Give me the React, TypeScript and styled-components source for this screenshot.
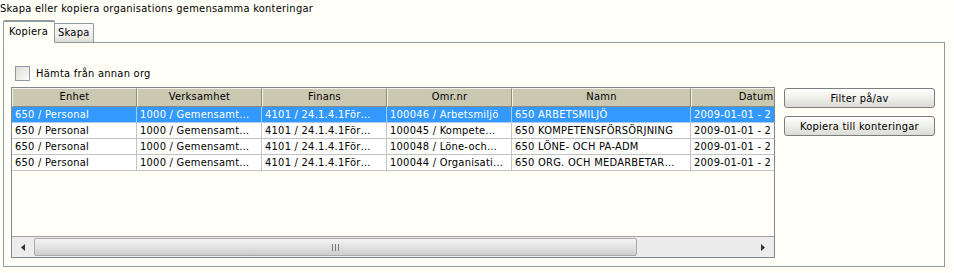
import styled, { createGlobalStyle } from 'styled-components'

const GlobalStyle = createGlobalStyle`
  html, body {
    margin: 0;
    padding: 0;
    background: #fffff7;
  }
  body {
    font-family: 'DejaVu Sans Condensed', 'DejaVu Sans', sans-serif;
    font-stretch: condensed;
    font-size: 11px;
    letter-spacing: 0.25px;
    color: #000;
  }
`

type Row = {
  cells: string[]
  selected?: boolean
}

const columns = [
  { title: 'Enhet', width: 125 },
  { title: 'Verksamhet', width: 125 },
  { title: 'Finans', width: 125 },
  { title: 'Omr.nr', width: 125 },
  { title: 'Namn', width: 179 },
  { title: 'Datum', width: 130 },
]

// texts as the grid shows them, already cut to the column width
const rows: Row[] = [
  {
    selected: true,
    cells: ['650 / Personal', '1000 / Gemensamt…', '4101 / 24.1.4.1För…', '100046 / Arbetsmiljö', '650 ARBETSMILJÖ', '2009-01-01 - 2'],
  },
  {
    cells: ['650 / Personal', '1000 / Gemensamt…', '4101 / 24.1.4.1För…', '100045 / Kompete…', '650 KOMPETENSFÖRSÖRJNING', '2009-01-01 - 2'],
  },
  {
    cells: ['650 / Personal', '1000 / Gemensamt…', '4101 / 24.1.4.1För…', '100048 / Löne-och…', '650 LÖNE- OCH PA-ADM', '2009-01-01 - 2'],
  },
  {
    cells: ['650 / Personal', '1000 / Gemensamt…', '4101 / 24.1.4.1För…', '100044 / Organisati…', '650 ORG. OCH MEDARBETAR…', '2009-01-01 - 2'],
  },
]

const Page = styled.div`
  padding: 1px 0 0 0;
  width: 954px;
`

const Title = styled.div`
  height: 19px;
  line-height: 16px;
`

const TabStrip = styled.div`
  display: flex;
  align-items: flex-end;
  padding-left: 3px;
  height: 22px;
  position: relative;
  z-index: 1;
`

const Tab = styled.div<{ $active?: boolean }>`
  box-sizing: border-box;
  border: 1px solid #919b9c;
  border-radius: 2px 2px 0 0;
  ${p =>
    p.$active
      ? `
    height: 23px;
    line-height: 19px;
    padding: 0 6px 0 5px;
    margin-bottom: -1px;
    border-top: 2px solid #919b9c;
    border-bottom: 1px solid #fffff7;
    background: #fffff7;
  `
      : `
    height: 19px;
    line-height: 18px;
    padding: 0 4px 0 3px;
    margin-left: -1px;
    border-bottom: none;
    background: linear-gradient(#fcfcfe, #ecebe6 70%, #dddcd5);
  `}
`

const Panel = styled.div`
  margin-left: 3px;
  width: 942px;
  height: 225px;
  box-sizing: border-box;
  border: 1px solid #919b9c;
  background: #fffff7;
  padding: 23px 9px 0 7px;
`

const CheckRow = styled.label`
  display: flex;
  align-items: center;
  gap: 6px;
  height: 15px;
  margin-left: 4px;
  margin-bottom: 6px;
`

const CheckBox = styled.span`
  width: 13px;
  height: 13px;
  border: 1px solid #8f9aa8;
  background: linear-gradient(135deg, #dcdcd5, #f4f4f0 70%, #ffffff);
`

const Body = styled.div`
  display: flex;
  gap: 9px;
  align-items: flex-start;
`

const Grid = styled.div`
  width: 764px;
  height: 171px;
  box-sizing: border-box;
  border: 1px solid #828790;
  display: flex;
  flex-direction: column;
  background: #fffff7;
`

const Viewport = styled.div`
  flex: 1;
  overflow: hidden;
`

const Table = styled.div`
  width: ${columns.reduce((s, c) => s + c.width, 0)}px;
`

const HeaderRow = styled.div`
  display: flex;
  height: 19px;
`

const HeaderCell = styled.div<{ $w: number }>`
  flex: 0 0 ${p => p.$w}px;
  box-sizing: border-box;
  background: #cbc8b2;
  border-top: 1px solid #f4f3ea;
  border-left: 1px solid #f4f3ea;
  border-right: 1px solid #8d8b7b;
  border-bottom: 1px solid #8d8b7b;
  text-align: center;
  line-height: 16px;
  white-space: nowrap;
  overflow: hidden;
`

const DataRow = styled.div<{ $selected?: boolean }>`
  display: flex;
  height: 16px;
  background: ${p => (p.$selected ? '#3399ff' : '#ffffff')};
  color: ${p => (p.$selected ? '#ffffff' : '#000000')};
`

const Cell = styled.div<{ $w: number; $selected?: boolean }>`
  flex: 0 0 ${p => p.$w}px;
  box-sizing: border-box;
  padding: 0 0 0 3px;
  border-right: 1px solid ${p => (p.$selected ? '#a8cdf5' : '#c4c4c4')};
  border-bottom: 1px solid ${p => (p.$selected ? '#a8cdf5' : '#c4c4c4')};
  line-height: 15px;
  white-space: nowrap;
  overflow: hidden;
  text-overflow: ellipsis;
`

const ScrollBar = styled.div`
  display: flex;
  height: 20px;
  border-top: 1px solid #a0a0a0;
  background: #ececec;
`

const ArrowButton = styled.div`
  display: flex;
  align-items: center;
  justify-content: center;
  flex: 0 0 22px;
`

const Thumb = styled.div`
  width: 603px;
  box-sizing: border-box;
  border: 1px solid #a9a9a9;
  border-radius: 2px;
  background: linear-gradient(#f4f4f4, #e2e2e2 50%, #cdcdcd);
  display: flex;
  align-items: center;
  justify-content: center;
  margin: 1px 0;
`

const Track = styled.div`
  flex: 1;
`

const Grip = styled.div`
  display: flex;
  gap: 2px;
  span {
    width: 1px;
    height: 7px;
    background: #7a7a7a;
  }
`

const Buttons = styled.div`
  display: flex;
  flex-direction: column;
  gap: 8px;
  padding-top: 1px;
`

const Button = styled.button`
  width: 151px;
  height: 20px;
  box-sizing: border-box;
  border: 1px solid #7d7d7d;
  border-radius: 3px;
  background: linear-gradient(#ffffff, #f0f0ec 45%, #dcdcd6);
  font-family: inherit;
  font-stretch: inherit;
  letter-spacing: inherit;
  font-size: 11px;
  color: #000;
  padding: 0;
  line-height: 17px;
`

export default function App() {
  return (
    <Page>
      <GlobalStyle />
      <Title>Skapa eller kopiera organisations gemensamma konteringar</Title>
      <TabStrip>
        <Tab $active>Kopiera</Tab>
        <Tab>Skapa</Tab>
      </TabStrip>
      <Panel>
        <CheckRow>
          <CheckBox />
          Hämta från annan org
        </CheckRow>
        <Body>
          <Grid>
            <Viewport>
              <Table>
                <HeaderRow>
                  {columns.map(c => (
                    <HeaderCell key={c.title} $w={c.width}>
                      {c.title}
                    </HeaderCell>
                  ))}
                </HeaderRow>
                {rows.map((r, i) => (
                  <DataRow key={i} $selected={r.selected}>
                    {r.cells.map((text, j) => (
                      <Cell key={j} $w={columns[j].width} $selected={r.selected}>
                        {text}
                      </Cell>
                    ))}
                  </DataRow>
                ))}
              </Table>
            </Viewport>
            <ScrollBar>
              <ArrowButton>
                <svg width="4" height="7" viewBox="0 0 4 7">
                  <path d="M4 0 L0 3.5 L4 7 Z" fill="#333" />
                </svg>
              </ArrowButton>
              <Thumb>
                <Grip>
                  <span />
                  <span />
                  <span />
                </Grip>
              </Thumb>
              <Track />
              <ArrowButton>
                <svg width="4" height="7" viewBox="0 0 4 7">
                  <path d="M0 0 L4 3.5 L0 7 Z" fill="#333" />
                </svg>
              </ArrowButton>
            </ScrollBar>
          </Grid>
          <Buttons>
            <Button>Filter på/av</Button>
            <Button>Kopiera till konteringar</Button>
          </Buttons>
        </Body>
      </Panel>
    </Page>
  )
}
